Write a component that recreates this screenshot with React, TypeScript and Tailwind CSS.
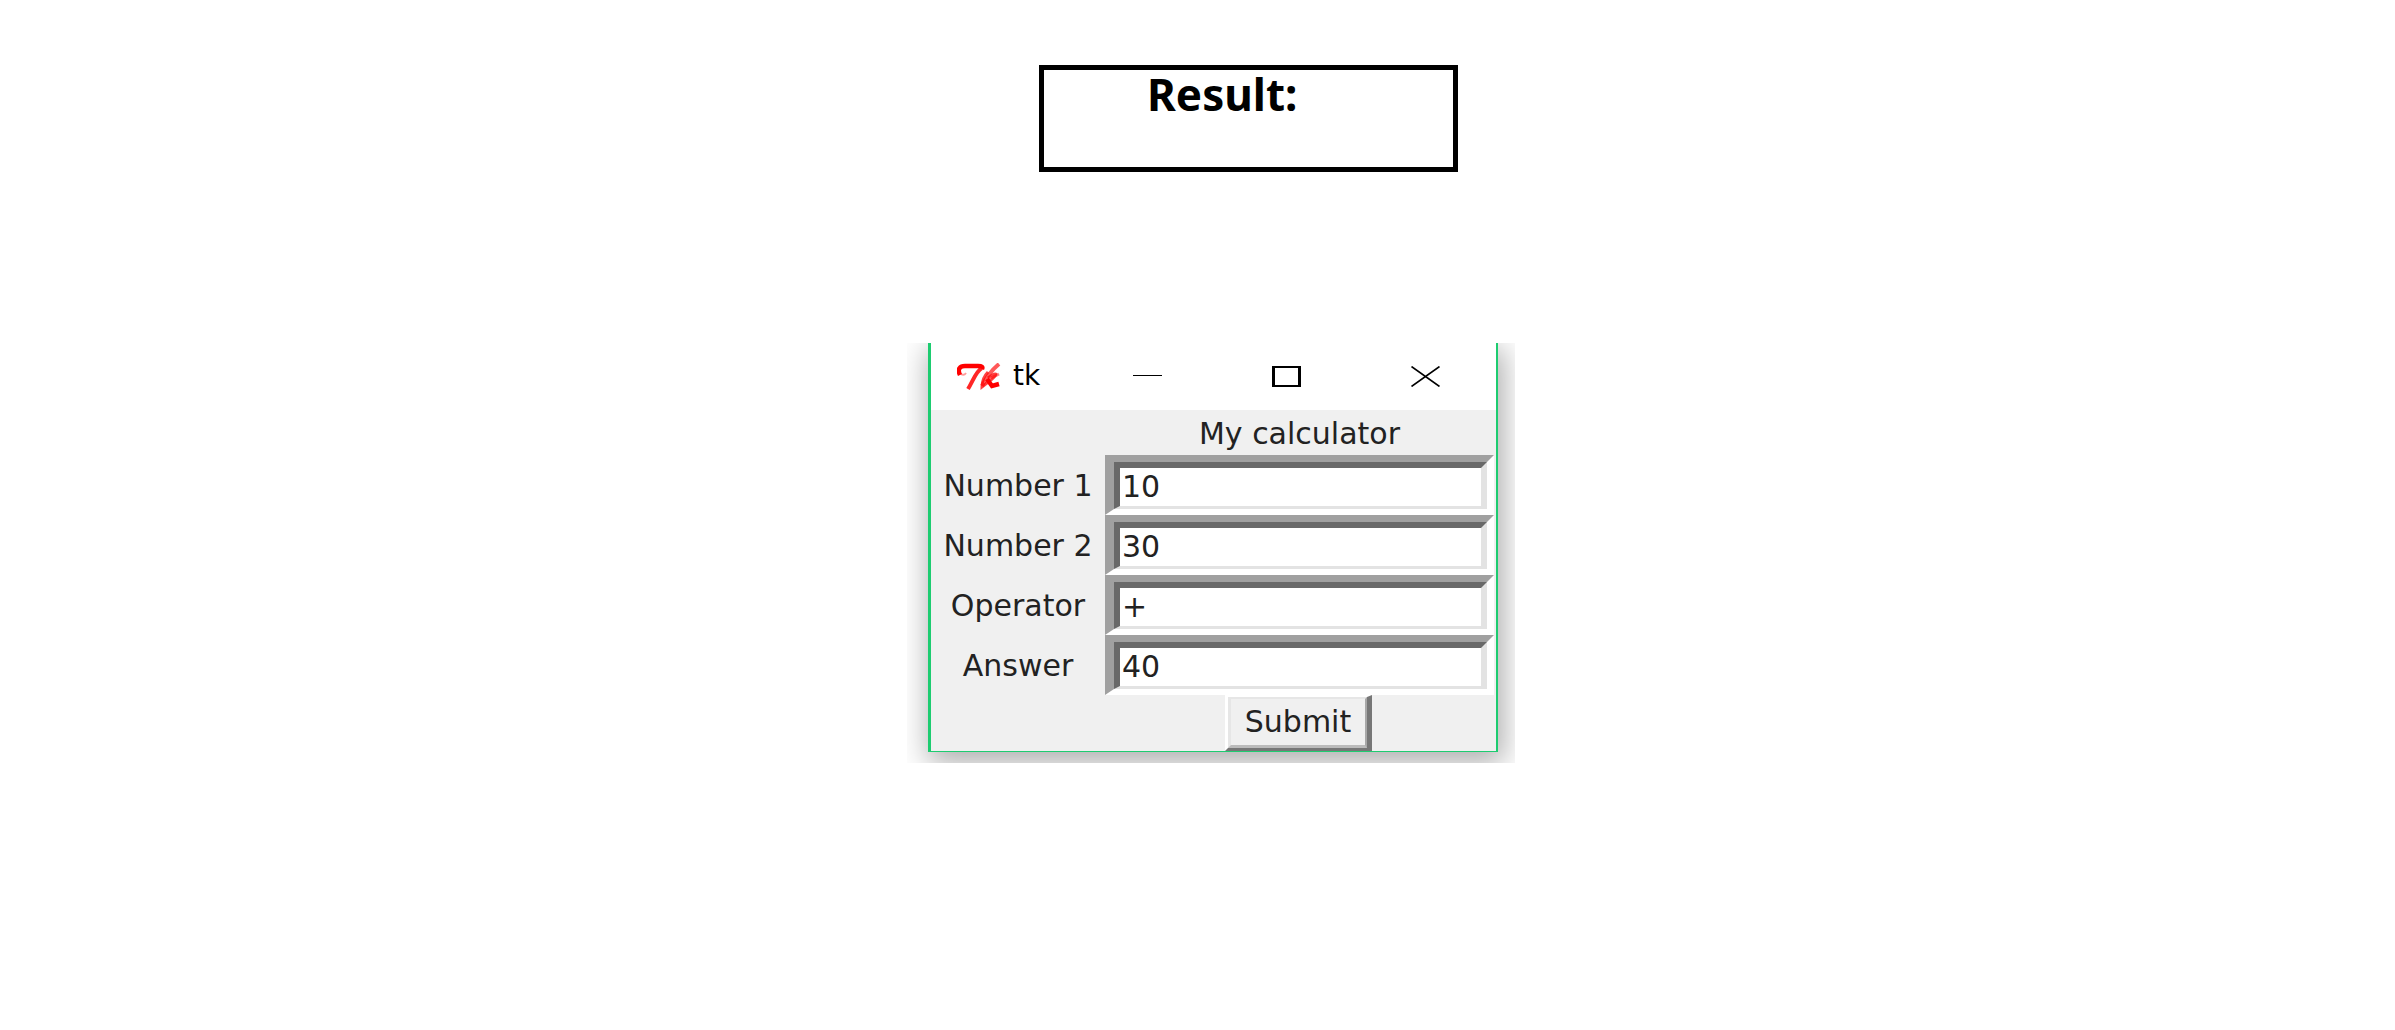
import React, { useState } from "react";

const fields = [
  { id: "number1", label: "Number 1", value: "10" },
  { id: "number2", label: "Number 2", value: "30" },
  { id: "operator", label: "Operator", value: "+" },
  { id: "answer", label: "Answer", value: "40" },
];

function TkLogo() {
  return (
    <svg className="h-7 w-11 shrink-0" viewBox="0 0 44 28" fill="none" stroke="#ff0000" aria-hidden="true">
      <path d="M3 12C0 6 3 3 8 3H21C25 3 26 4 25 6" strokeWidth="4.5" />
      <path d="M4 11Q7 13 9 10" strokeWidth="2" opacity="0.4" />
      <path d="M25 5C19 8 16 18 11 26" strokeWidth="4" opacity="0.85" />
      <path d="M42 1C36 6 30 13 25 23" strokeWidth="4" opacity="0.65" />
      <path d="M31 9C27 13 25 18 25 24L35 16C41 11 40 8 31 15" strokeWidth="3" opacity="0.75" />
      <path d="M30 16L35 23L42 21" strokeWidth="4.5" />
      <path d="M34 15L42 11" strokeWidth="3" opacity="0.5" />
    </svg>
  );
}

function TitleBar() {
  return (
    <header className="flex h-[67px] items-center bg-white pl-[26px] pr-[56px]">
      <TkLogo />
      <h1 className="ml-3 pb-px text-[28px] leading-8 text-black">tk</h1>
      <div className="ml-auto flex items-center gap-[110px]">
        <button type="button" aria-label="Minimize">
          <svg className="h-[21px] w-[29px]" viewBox="0 0 29 21" aria-hidden="true">
            <rect x="0" y="9" width="29" height="1" fill="#000" />
          </svg>
        </button>
        <button type="button" aria-label="Maximize">
          <svg className="h-[21px] w-[29px]" viewBox="0 0 29 21" aria-hidden="true">
            <path d="M0 0H29V21H0ZM3 2V19H26V2Z" fill="#000" fillRule="evenodd" />
          </svg>
        </button>
        <button type="button" aria-label="Close">
          <svg className="h-[21px] w-[29px]" viewBox="0 0 29 21" aria-hidden="true">
            <path d="M0.5 0.5L28.5 20.5M28.5 0.5L0.5 20.5" stroke="#000" strokeWidth="1.6" />
          </svg>
        </button>
      </div>
    </header>
  );
}

function Field({ id, label, value }: { id: string; label: string; value: string }) {
  const [text, setText] = useState(value);
  return (
    <>
      <label htmlFor={id} className="self-center pt-px text-center">
        {label}
      </label>
      <div className="h-[60px] border-t-[7px] border-r-[7px] border-b-[6px] border-l-[9px] border-t-[#a0a0a0] border-r-white border-b-white border-l-[#a0a0a0]">
        <input
          id={id}
          type="text"
          value={text}
          onChange={(e) => setText(e.target.value)}
          className="block h-full w-full border-t-[6px] border-r-[6px] border-b-[3px] border-l-[6px] border-t-[#696969] border-r-[#e3e3e3] border-b-[#e3e3e3] border-l-[#696969] bg-white pb-[2px] pl-[2px] outline-none"
        />
      </div>
    </>
  );
}

export default function App() {
  return (
    <main className="flex flex-col items-center pt-[65px] font-['DejaVu_Sans',sans-serif] text-[#222]">
      <section className="ml-[102px] h-[107px] w-full max-w-[419px] border-[5px] border-black pl-[103px]">
        <h2 className="font-['Noto_Sans',sans-serif] text-[44px] leading-[48px] font-bold text-black">Result:</h2>
      </section>

      <div className="mt-[171px] ml-[27px] w-full max-w-[608px] overflow-hidden pr-[17px] pb-[11px] pl-[21px]">
        <form
          onSubmit={(e) => e.preventDefault()}
          className="border-r-2 border-b border-l-[3px] border-[#1dcc70] bg-[#f0f0f0] shadow-[3px_8px_28px_3px_rgba(0,0,0,0.32)]"
        >
          <TitleBar />
          <div className="grid grid-cols-[174px_1fr] pr-[2px] text-[30px] leading-10">
            <p className="col-start-2 h-[45px] pt-1 text-center">My calculator</p>
            {fields.map((f) => (
              <Field key={f.id} {...f} />
            ))}
          </div>
          <div className="grid grid-cols-[174px_1fr] pr-1 text-[30px] leading-10">
            <button
              type="submit"
              className="col-start-2 h-14 w-[147px] justify-self-center border-t-2 border-r-[5px] border-b-[3px] border-l-[3px] border-t-white border-r-[#777] border-b-[#777] border-l-white"
            >
              <span className="flex h-full items-center justify-center border-t-2 border-r-2 border-b-[3px] border-l-[3px] border-t-[#e6e6e6] border-r-[#a8a8a8] border-b-[#bbb] border-l-[#e6e6e6]">
                Submit
              </span>
            </button>
          </div>
        </form>
      </div>
    </main>
  );
}
